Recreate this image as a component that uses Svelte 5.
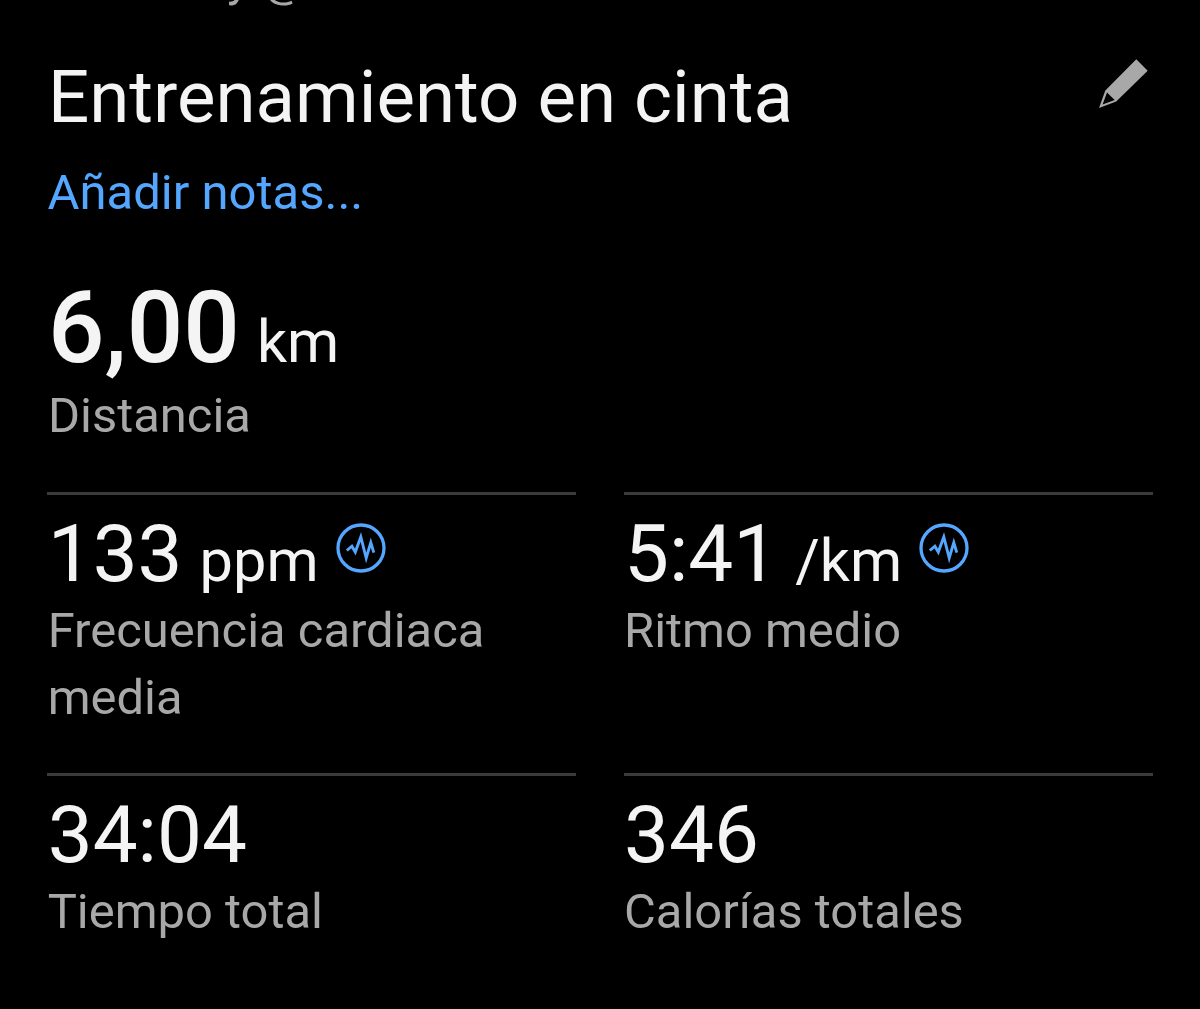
<script lang="ts">
  type Stat = {
    value: string;
    unit?: string;
    label: string;
    zones?: boolean;
  };

  const stats: Stat[] = [
    { value: '133', unit: 'ppm', label: 'Frecuencia cardiaca media', zones: true },
    { value: '5:41', unit: '/km', label: 'Ritmo medio', zones: true },
    { value: '34:04', label: 'Tiempo total' },
    { value: '346', label: 'Calorías totales' }
  ];
</script>

<main class="activity">
  <div class="meta">y @</div>

  <header class="header">
    <h1>Entrenamiento en cinta</h1>
    <svg class="edit" viewBox="0 0 50 50" aria-hidden="true">
      <path d="M37.3 0.2 L48.7 11.7 L17.2 42.5 L0 49 L6.3 31.5 Z M8 33.5 L3.6 45.4 L15.7 41 Z" fill="#a8a8a8" fill-rule="evenodd" />
    </svg>
  </header>
  <div class="notes">Añadir notas...</div>

  <section class="distance">
    <div class="value">
      <span class="number">6,00</span>
      <span class="unit">km</span>
    </div>
    <div class="label">Distancia</div>
  </section>

  <section class="stats">
    {#each stats as stat}
      <div class="stat">
        <div class="value">
          <span class="number">{stat.value}</span>
          {#if stat.unit}
            <span class="unit">{stat.unit}</span>
          {/if}
          {#if stat.zones}
            <svg class="zones" viewBox="0 0 50 50" fill="none" stroke="#54a6ff" aria-hidden="true">
              <circle cx="25" cy="25" r="23" stroke-width="3.3" />
              <path d="M10.8 27.5 L15.9 23.2 L19.3 29 L24.8 14 L30.2 35 L34.8 19.5 L37.8 29.7" stroke-width="2.9" stroke-miterlimit="10" />
            </svg>
          {/if}
        </div>
        <div class="label">{stat.label}</div>
      </div>
    {/each}
  </section>
</main>

<style>
  :global(body) {
    margin: 0;
    background: #000;
  }

  .activity {
    display: flex;
    flex-direction: column;
    box-sizing: border-box;
    height: 1009px;
    padding: 0 47px 0 48px;
    overflow: hidden;
    background: #000;
    color: #f4f4f4;
    font-family: Roboto, sans-serif;
  }

  .meta {
    flex: none;
    margin-top: -55px;
    padding-left: 179px;
    color: #a8a8a8;
    font-size: 49px;
    line-height: 67px;
  }

  .header {
    display: flex;
    justify-content: space-between;
    margin-top: 41px;
  }

  h1 {
    margin: 0;
    font-size: 72.6px;
    font-weight: 400;
    line-height: 90px;
  }

  .edit {
    width: 50px;
    height: 50px;
    margin: 6px 4px 0 0;
  }

  .notes {
    margin: 16px 0 0 -0.5px;
    color: #54a6ff;
    font-size: 49px;
    line-height: 67px;
  }

  .value {
    display: flex;
    align-items: baseline;
    white-space: nowrap;
  }

  .unit {
    font-size: 59.5px;
    line-height: 60px;
  }

  .label {
    color: #a8a8a8;
    font-size: 48.9px;
    line-height: 67px;
  }

  .distance {
    margin-top: 46px;
  }

  .distance .value {
    height: 110px;
    gap: 17px;
  }

  .distance .number {
    font-size: 99.5px;
    font-weight: 500;
    line-height: 112px;
  }

  .stats {
    display: grid;
    grid-template-columns: 529px 529px;
    column-gap: 48px;
    row-gap: 42px;
    margin: 43px 0 0 -1px;
  }

  .stat {
    padding-top: 14px;
    border-top: 3px solid #3b3b3b;
  }

  .stat:nth-child(odd) {
    padding-left: 0.7px;
  }

  .stat .value {
    height: 88px;
    gap: 17px;
  }

  .stat .number {
    font-size: 80px;
    line-height: 91px;
  }

  .zones {
    align-self: flex-start;
    width: 50px;
    height: 50px;
    margin-top: 14px;
  }
</style>
